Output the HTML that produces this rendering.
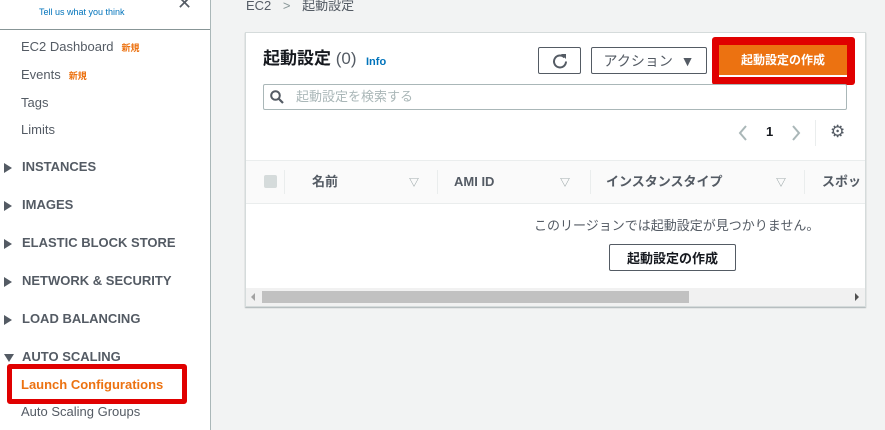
<!DOCTYPE html>
<html><head><meta charset="utf-8"><style>
*{box-sizing:border-box;margin:0;padding:0}
body{width:885px;height:430px;overflow:hidden;background:#f2f3f3;font-family:"Liberation Sans","Noto Sans CJK JP",sans-serif;color:#16191f;position:relative}
.a{position:absolute;white-space:nowrap;line-height:16px}
#side{position:absolute;left:0;top:0;width:211px;height:430px;background:#fff;border-right:1px solid #aab7b8}
.it{font-size:13px;color:#545b64;left:21px}
.new{font-size:9px;color:#ec7211;font-weight:bold;margin-left:8px}
.sec{font-size:13px;font-weight:bold;color:#545b64;left:22px}
.tri{left:4px;width:0;height:0;border-top:5px solid transparent;border-bottom:5px solid transparent;border-left:8px solid #545b64}
.btn{position:absolute;border:1px solid #545b64;border-radius:2px;background:#fff;font-size:14px;color:#545b64;display:flex;align-items:center;justify-content:center;font-weight:bold}
.th{font-size:13px;font-weight:bold;color:#545b64;top:174px}
</style></head><body>
<div id="side">
<div class="a" style="left:39px;top:4px;font-size:9px;color:#0073bb">Tell us what you think</div>
<div class="a" style="left:177px;top:-5px;font-size:18px;color:#545b64">✕</div>
<div class="a" style="left:0;top:29px;width:210px;height:1px;background:#879596"></div>
<div class="a it" style="top:39px">EC2 Dashboard<span class="new">新規</span></div>
<div class="a it" style="top:67px">Events<span class="new">新規</span></div>
<div class="a it" style="top:95px">Tags</div>
<div class="a it" style="top:122px">Limits</div>
<div class="a tri" style="top:163px"></div><div class="a sec" style="top:159px">INSTANCES</div>
<div class="a tri" style="top:201px"></div><div class="a sec" style="top:197px">IMAGES</div>
<div class="a tri" style="top:239px"></div><div class="a sec" style="top:235px">ELASTIC BLOCK STORE</div>
<div class="a tri" style="top:277px"></div><div class="a sec" style="top:273px">NETWORK &amp; SECURITY</div>
<div class="a tri" style="top:315px"></div><div class="a sec" style="top:311px">LOAD BALANCING</div>
<div class="a" style="left:4px;top:354px;width:0;height:0;border-left:5px solid transparent;border-right:5px solid transparent;border-top:8px solid #545b64"></div><div class="a sec" style="top:349px">AUTO SCALING</div>
<div class="a" style="left:7px;top:364px;width:180px;height:40px;border:5px solid #e00000;border-radius:3px"></div>
<div class="a" style="left:21px;top:377px;font-size:13px;font-weight:bold;color:#ec7211">Launch Configurations</div>
<div class="a it" style="top:404px">Auto Scaling Groups</div>
</div>
<div class="a" style="left:246px;top:-2px;font-size:13px;color:#545b64">EC2 <span style="color:#879596;margin:0 8px">&gt;</span> 起動設定</div>
<div class="a" style="left:245px;top:32px;width:621px;height:275px;background:#fff;border:1px solid #d5dbdb;box-shadow:0 1px 1px rgba(0,28,36,.3)"></div>
<div class="a" style="left:263px;top:50px;font-size:17px;line-height:18px;font-weight:bold">起動設定 <span style="font-weight:normal;color:#545b64">(0)</span></div>
<div class="a" style="left:366px;top:54px;font-size:11px;font-weight:bold;color:#0073bb">Info</div>
<div class="btn" style="left:538px;top:47px;width:43px;height:27px"><svg width="16" height="16" viewBox="0 0 16 16"><path d="M12.5 4.5A6 6 0 1 0 14 8.5" fill="none" stroke="#545b64" stroke-width="2"/><path d="M9 1h5v5z" fill="#545b64"/></svg></div>
<div class="btn" style="left:591px;top:47px;width:116px;height:27px;font-weight:normal">アクション&nbsp;&nbsp;▼</div>
<div class="a" style="left:712px;top:37px;width:143px;height:48px;background:#e00000;border-radius:3px"></div>
<div class="a" style="left:719px;top:45px;width:128px;height:32px;background:#ec7211;border-bottom:2px solid #fff;color:#fff;font-size:12px;font-weight:bold;display:flex;align-items:center;justify-content:center">起動設定の作成</div>
<div class="a" style="left:263px;top:84px;width:584px;height:26px;border:1px solid #aab7b8;border-radius:2px;background:#fff"></div>
<svg class="a" style="left:270px;top:90px" width="14" height="14" viewBox="0 0 14 14"><circle cx="5.5" cy="5.5" r="4.3" fill="none" stroke="#545b64" stroke-width="2"/><path d="M8.5 8.5L13 13" stroke="#545b64" stroke-width="2.2"/></svg>
<div class="a" style="left:296px;top:89px;font-size:13px;color:#aab7b8">起動設定を検索する</div>
<svg class="a" style="left:738px;top:125px" width="10" height="16"><path d="M8 1L2 8l6 7" fill="none" stroke="#aab7b8" stroke-width="2"/></svg>
<div class="a" style="left:766px;top:124px;font-size:13px;font-weight:bold">1</div>
<svg class="a" style="left:791px;top:125px" width="10" height="16"><path d="M2 1l6 7-6 7" fill="none" stroke="#aab7b8" stroke-width="2"/></svg>
<div class="a" style="left:815px;top:120px;width:1px;height:26px;background:#eaeded"></div>
<div class="a" style="left:830px;top:124px;font-size:17px;color:#545b64">⚙</div>
<div class="a" style="left:246px;top:160px;width:619px;height:44px;background:#fafafa;border-top:1px solid #eaeded;border-bottom:1px solid #eaeded"></div>
<div class="a" style="left:264px;top:175px;width:13px;height:13px;background:#d5dbdb;border-radius:2px"></div>
<div class="a" style="left:284px;top:170px;width:1px;height:24px;background:#eaeded"></div>
<div class="a" style="left:437px;top:170px;width:1px;height:24px;background:#eaeded"></div>
<div class="a" style="left:590px;top:170px;width:1px;height:24px;background:#eaeded"></div>
<div class="a" style="left:804px;top:170px;width:1px;height:24px;background:#eaeded"></div>
<div class="a th" style="left:312px">名前</div>
<div class="a th" style="left:454px">AMI ID</div>
<div class="a th" style="left:606px">インスタンスタイプ</div>
<div class="a th" style="left:822px">スポッ</div>
<div class="a" style="left:409px;top:176px;font-size:10px;color:#879596">▽</div>
<div class="a" style="left:560px;top:176px;font-size:10px;color:#879596">▽</div>
<div class="a" style="left:776px;top:176px;font-size:10px;color:#879596">▽</div>
<div class="a" style="left:534px;top:218px;font-size:13px;color:#545b64">このリージョンでは起動設定が見つかりません。</div>
<div class="btn" style="left:609px;top:244px;width:127px;height:27px;font-size:13px;color:#16191f">起動設定の作成</div>
<div class="a" style="left:246px;top:288px;width:619px;height:18px;background:#f1f1f1"></div>
<div class="a" style="left:262px;top:291px;width:427px;height:12px;background:#c1c1c1"></div>
<div class="a" style="left:251px;top:293px;width:0;height:0;border-top:4px solid transparent;border-bottom:4px solid transparent;border-right:4px solid #a3a3a3"></div>
<div class="a" style="left:855px;top:293px;width:0;height:0;border-top:4px solid transparent;border-bottom:4px solid transparent;border-left:4px solid #505050"></div>
</body></html>
